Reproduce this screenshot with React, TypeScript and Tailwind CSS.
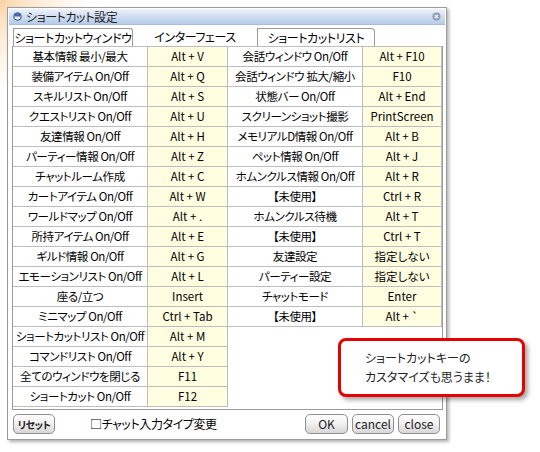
import React from 'react';

const leftRows: [string, string][] = [
  ['基本情報 最小/最大', 'Alt + V'],
  ['装備アイテム On/Off', 'Alt + Q'],
  ['スキルリスト On/Off', 'Alt + S'],
  ['クエストリスト On/Off', 'Alt + U'],
  ['友達情報 On/Off', 'Alt + H'],
  ['パーティー情報 On/Off', 'Alt + Z'],
  ['チャットルーム作成', 'Alt + C'],
  ['カートアイテム On/Off', 'Alt + W'],
  ['ワールドマップ On/Off', 'Alt + .'],
  ['所持アイテム On/Off', 'Alt + E'],
  ['ギルド情報 On/Off', 'Alt + G'],
  ['エモーションリスト On/Off', 'Alt + L'],
  ['座る/立つ', 'Insert'],
  ['ミニマップ On/Off', 'Ctrl + Tab'],
  ['ショートカットリスト On/Off', 'Alt + M'],
  ['コマンドリスト On/Off', 'Alt + Y'],
  ['全てのウィンドウを閉じる', 'F11'],
  ['ショートカット On/Off', 'F12'],
];

const rightRows: [string, string][] = [
  ['会話ウィンドウ On/Off', 'Alt + F10'],
  ['会話ウィンドウ 拡大/縮小', 'F10'],
  ['状態バー On/Off', 'Alt + End'],
  ['スクリーンショット撮影', 'PrintScreen'],
  ['メモリアルD情報 On/Off', 'Alt + B'],
  ['ペット情報 On/Off', 'Alt + J'],
  ['ホムンクルス情報 On/Off', 'Alt + R'],
  ['【未使用】', 'Ctrl + R'],
  ['ホムンクルス待機', 'Alt + T'],
  ['【未使用】', 'Ctrl + T'],
  ['友達設定', '指定しない'],
  ['パーティー設定', '指定しない'],
  ['チャットモード', 'Enter'],
  ['【未使用】', 'Alt + `'],
];

function KeyTable({ rows, keyWidth }: { rows: [string, string][]; keyWidth: string }) {
  return (
    <div className="flex flex-col">
      {rows.map(([label, key], i) => (
        <div key={i} className="flex h-[20px]">
          <div className="w-[135px] flex items-center justify-center border-r border-b border-[#bdbdbd] whitespace-nowrap overflow-hidden">
            {label}
          </div>
          <div
            className={`${keyWidth} flex items-center justify-center border-r border-b border-[#bdbdbd] bg-[#fffee0] whitespace-nowrap tracking-normal`}
          >
            {key}
          </div>
        </div>
      ))}
    </div>
  );
}

function Btn({ children, className = '' }: { children: React.ReactNode; className?: string }) {
  return (
    <button
      className={`h-[20px] flex items-center justify-center whitespace-nowrap rounded-[5px] border border-[#8f8f8f] bg-gradient-to-b from-[#ffffff] via-[#f0f0f0] to-[#d6d6d6] text-[#222] ${className}`}
    >
      {children}
    </button>
  );
}

export default function App() {
  return (
    <div
      className="relative w-[540px] h-[452px] overflow-hidden bg-[radial-gradient(circle_at_0%_0%,#fbd3a3_0px,#fde9d2_30px,#ffffff_90px)] pl-[7px] pt-[7px] text-[11.5px] tracking-[-0.4px] text-black [font-feature-settings:'palt']"
      style={{ fontFamily: '"Noto Sans CJK JP", "Noto Sans", sans-serif' }}
    >
      {/* window */}
      <div className="w-[440px] h-[433px] border border-[#9c9c9c] bg-white p-[1px] flex flex-col shadow-[2px_2px_3px_rgba(0,0,0,0.3)]">
        {/* title bar */}
        <div className="h-[16px] flex items-center gap-[4px] pl-[4px] pr-[4px] bg-gradient-to-b from-[#eef3fb] via-[#d0ddf2] to-[#b6cbea] border-b border-[#a9bcdb]">
          <svg width="9" height="9" viewBox="0 0 9 9">
            <circle cx="4.5" cy="4.5" r="3.8" fill="#e8eef8" stroke="#2f4d86" strokeWidth="1" />
            <path d="M1 4.5 A3.5 3.5 0 0 1 8 4.5 Z" fill="#4a6aa6" />
          </svg>
          <span className="text-[12px] leading-none text-[#1d1d1d] whitespace-nowrap">ショートカット設定</span>
          <svg className="ml-auto" width="9" height="9" viewBox="0 0 9 9">
            <circle cx="4.5" cy="4.5" r="4" fill="#8f9db5" />
            <path d="M2.8 2.8 L6.2 6.2 M6.2 2.8 L2.8 6.2" stroke="#fff" strokeWidth="1.2" />
          </svg>
        </div>

        {/* tabs */}
        <div className="mt-[2px] h-[19px] flex items-end pl-[4px] text-[12px]">
          <div className="w-[120px] h-[18px] flex items-center justify-center whitespace-nowrap overflow-hidden border border-b-0 border-[#9a9a9a] rounded-tr-[3px]">
            ショートカットウィンドウ
          </div>
          <div className="w-[124px] h-[18px] flex items-center justify-center whitespace-nowrap">
            インターフェース
          </div>
          <div className="w-[118px] h-[18px] flex items-center justify-center whitespace-nowrap border border-b-0 border-[#9a9a9a] rounded-tr-[4px]">
            ショートカットリスト
          </div>
        </div>

        {/* panel */}
        <div className="ml-[3px] w-[431px] h-[364px] border-l border-r border-b border-[#9a9a9a]">
          <div className="flex items-start border-t border-[#bdbdbd]">
            <KeyTable rows={leftRows} keyWidth="w-[80px]" />
            <KeyTable rows={rightRows} keyWidth="w-[79px]" />
          </div>
        </div>

        {/* bottom bar */}
        <div className="flex-1 flex items-center pl-[4px] pr-[5px]">
          <Btn className="w-[42px] text-[10px] font-bold tracking-[-0.5px]">リセット</Btn>
          <span className="ml-[35px] text-[12px] whitespace-nowrap">□チャット入力タイプ変更</span>
          <div className="ml-auto flex gap-[4px] text-[12px] tracking-normal">
            <Btn className="w-[43px]">OK</Btn>
            <Btn className="w-[42px]">cancel</Btn>
            <Btn className="w-[42px]">close</Btn>
          </div>
        </div>
      </div>

      {/* callout */}
      <div className="absolute left-[338px] top-[338px] w-[187px] h-[59px] rounded-[8px] border-[3px] border-[#e60000] bg-white pl-[24px] pt-[7px] leading-[19px] text-[12px] tracking-normal text-[#222] shadow-[3px_3px_4px_rgba(0,0,0,0.35)]">
        <div>ショートカットキーの</div>
        <div>カスタマイズも思うまま！</div>
      </div>
    </div>
  );
}
